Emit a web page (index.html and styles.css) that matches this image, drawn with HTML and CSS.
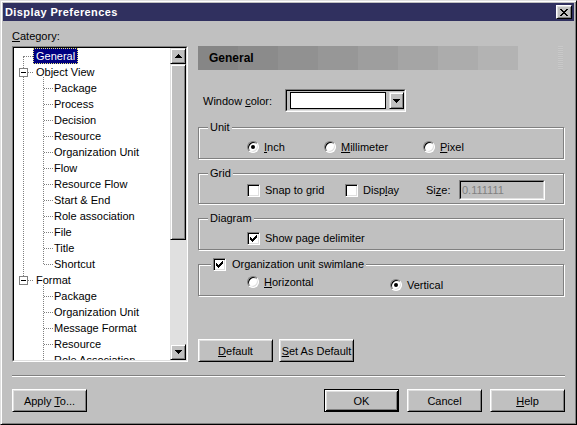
FILE: index.html
```html
<!DOCTYPE html>
<html lang="en">
<head>
  <meta charset="UTF-8">
  <title>Display Preferences</title>
  <link rel="stylesheet" href="styles.css">
</head>
<body>
<div class="window">
  <div class="titlebar">
    <span class="title">Display Preferences</span>
    <span class="close">
      <svg width="8" height="7" viewBox="0 0 8 7" shape-rendering="crispEdges"><path d="M0 0h2v1H0zM6 0h2v1H6zM1 1h2v1H1zM5 1h2v1H5zM2 2h4v1H2zM3 3h2v1H3zM2 4h4v1H2zM1 5h2v1H1zM5 5h2v1H5zM0 6h2v1H0zM6 6h2v1H6z"/></svg>
    </span>
  </div>

  <div class="main">
    <div class="left">
      <div class="caption"><u>C</u>ategory:</div>
      <div class="tree">
        <div class="tree-inner">
          <div class="tree-view">
            <ul class="tree-list">
              <li class="node"><div class="row first"><span class="sel">General</span></div></li>
              <li class="node">
                <div class="row"><span class="toggle"></span>Object View</div>
                <ul class="branch">
                  <li class="row">Package</li>
                  <li class="row">Process</li>
                  <li class="row">Decision</li>
                  <li class="row">Resource</li>
                  <li class="row">Organization Unit</li>
                  <li class="row">Flow</li>
                  <li class="row">Resource Flow</li>
                  <li class="row">Start &amp; End</li>
                  <li class="row">Role association</li>
                  <li class="row">File</li>
                  <li class="row">Title</li>
                  <li class="row">Shortcut</li>
                </ul>
              </li>
              <li class="node">
                <div class="row"><span class="toggle"></span>Format</div>
                <ul class="branch open">
                  <li class="row">Package</li>
                  <li class="row">Organization Unit</li>
                  <li class="row">Message Format</li>
                  <li class="row">Resource</li>
                  <li class="row">Role Association</li>
                </ul>
              </li>
            </ul>
          </div>
          <div class="scrollbar">
            <div class="sb-btn"><svg width="7" height="4" viewBox="0 0 7 4" shape-rendering="crispEdges"><path d="M3 0h1v1H3zM2 1h3v1H2zM1 2h5v1H1zM0 3h7v1H0z"/></svg></div>
            <div class="sb-thumb"></div>
            <div class="sb-track"></div>
            <div class="sb-btn"><svg width="7" height="4" viewBox="0 0 7 4" shape-rendering="crispEdges"><path d="M0 0h7v1H0zM1 1h5v1H1zM2 2h3v1H2zM3 3h1v1H3z"/></svg></div>
          </div>
        </div>
      </div>
    </div>

    <div class="right">
      <div class="head">
        <div class="head-bar">General</div>
        <div class="head-dots"></div>
      </div>

      <div class="color-row">
        <span class="color-label">Window <u>c</u>olor:</span>
        <div class="combo">
          <div class="combo-inner">
            <div class="swatch"></div>
            <div class="drop"><svg width="7" height="4" viewBox="0 0 7 4" shape-rendering="crispEdges"><path d="M0 0h7v1H0zM1 1h5v1H1zM2 2h3v1H2zM3 3h1v1H3z"/></svg></div>
          </div>
        </div>
      </div>

      <div class="group first-group">
        <div class="group-title">Unit</div>
        <div class="opts">
          <label class="opt w77"><span class="radio on"></span><span><u>I</u>nch</span></label>
          <label class="opt w99"><span class="radio"></span><span><u>M</u>illimeter</span></label>
          <label class="opt"><span class="radio"></span><span><u>P</u>ixel</span></label>
        </div>
      </div>

      <div class="group grid-group">
        <div class="group-title">Grid</div>
        <div class="opts">
          <label class="opt w98"><span class="check"></span><span>Snap to <u>g</u>rid</span></label>
          <label class="opt w81"><span class="check"></span><span>Disp<u>l</u>ay</span></label>
          <span class="size-label">Si<u>z</u>e:</span>
          <div class="field"><div class="field-inner">0.111111</div></div>
        </div>
      </div>

      <div class="group">
        <div class="group-title">Diagram</div>
        <div class="opts">
          <label class="opt"><span class="check"><svg width="7" height="7" viewBox="0 0 7 7" shape-rendering="crispEdges"><path d="M6 0h1v1H6zM5 1h2v1H5zM0 2h1v1H0zM4 2h3v1H4zM0 3h2v1H0zM3 3h3v1H3zM0 4h5v1H0zM1 5h3v1H1zM2 6h1v1H2z"/></svg></span><span>Show page delimiter</span></label>
        </div>
      </div>

      <div class="group lane-group">
        <div class="group-title lane-title"><span class="check"><svg width="7" height="7" viewBox="0 0 7 7" shape-rendering="crispEdges"><path d="M6 0h1v1H6zM5 1h2v1H5zM0 2h1v1H0zM4 2h3v1H4zM0 3h2v1H0zM3 3h3v1H3zM0 4h5v1H0zM1 5h3v1H1zM2 6h1v1H2z"/></svg></span><span>Organization unit swimlane</span></div>
        <div class="opts">
          <label class="opt w143"><span class="radio"></span><span><u>H</u>orizontal</span></label>
          <label class="opt low"><span class="radio on"></span><span>Vertical</span></label>
        </div>
      </div>

      <div class="panel-buttons">
        <button class="btn"><u>D</u>efault</button>
        <button class="btn"><u>S</u>et As Default</button>
      </div>
    </div>
  </div>

  <div class="separator"></div>

  <div class="footer">
    <button class="btn">Apply <u>T</u>o...</button>
    <div class="footer-right">
      <button class="btn default">OK</button>
      <button class="btn">Cancel</button>
      <button class="btn"><u>H</u>elp</button>
    </div>
  </div>
</div>
</body>
</html>
```

FILE: styles.css
```css
body {
  margin: 0;
  background: #c0c0c0;
  font-family: "Liberation Sans", Arial, sans-serif;
  font-size: 11px;
  color: #000;
}

u {
  text-decoration: underline;
  text-underline-offset: 1px;
}

.window {
  width: 577px;
  height: 425px;
  box-sizing: border-box;
  border: 1px solid;
  border-color: #dfdfdf #000 #000 #dfdfdf;
  box-shadow: inset 1px 1px #fff, inset -1px -1px #808080;
  padding: 2px;
  background: #c0c0c0;
}

/* title bar */
.titlebar {
  height: 18px;
  background: #30305f;
  display: flex;
  align-items: center;
  padding: 0 2px;
}

.title {
  color: #fff;
  font-weight: bold;
  letter-spacing: 0.4px;
}

.close {
  margin-left: auto;
  width: 16px;
  height: 14px;
  box-sizing: border-box;
  border: 1px solid;
  border-color: #fff #000 #000 #fff;
  box-shadow: inset 1px 1px #dfdfdf, inset -1px -1px #808080;
  background: #c0c0c0;
  display: flex;
  align-items: center;
  justify-content: center;
}

/* main area */
.main {
  display: flex;
  padding: 9px 0 0 9px;
}

.left {
  width: 176px;
}

.caption {
  line-height: 13px;
  height: 13px;
}

.tree {
  margin-top: 3px;
  height: 316px;
  box-sizing: border-box;
  border: 1px solid;
  border-color: #808080 #fff #fff #808080;
}

.tree-inner {
  height: 100%;
  box-sizing: border-box;
  border: 1px solid;
  border-color: #000 #dfdfdf #dfdfdf #000;
  display: flex;
}

.tree-view {
  flex: 1;
  background: #fff;
  overflow: hidden;
}

.tree-list, .branch {
  list-style: none;
  margin: 0;
  padding: 0;
  position: relative;
}

/* dotted connector lines */
.tree-list::before {
  content: "";
  position: absolute;
  left: 9px;
  top: 8px;
  height: 224px;
  border-left: 1px dotted #808080;
}

.branch::before {
  content: "";
  position: absolute;
  left: 29px;
  top: -3px;
  bottom: 8px;
  border-left: 1px dotted #808080;
}

.branch.open::before {
  bottom: 0;
}

.row {
  height: 16px;
  line-height: 16px;
  display: flex;
  align-items: center;
  position: relative;
  white-space: nowrap;
}

.node > .row {
  padding-left: 22px;
}

.node > .row.first {
  padding-left: 19px;
}

.row::before {
  content: "";
  position: absolute;
  left: 10px;
  top: 8px;
  width: 9px;
  border-top: 1px dotted #808080;
}

.branch .row {
  padding-left: 40px;
}

.branch .row::before {
  left: 30px;
  width: 9px;
}

.toggle {
  position: absolute;
  left: 5px;
  top: 4px;
  width: 9px;
  height: 9px;
  box-sizing: border-box;
  border: 1px solid #808080;
  background: #fff;
  z-index: 1;
}

.toggle::after {
  content: "";
  position: absolute;
  left: 1px;
  top: 3px;
  width: 5px;
  height: 1px;
  background: #000;
}

.sel {
  height: 16px;
  line-height: 14px;
  box-sizing: border-box;
  padding: 0 2px;
  border: 1px dotted #e8e878;
  background: #000080;
  color: #fff;
}

/* scrollbar */
.scrollbar {
  width: 16px;
  display: flex;
  flex-direction: column;
  background: #e0e0e0;
}

.sb-btn, .sb-thumb, .drop {
  box-sizing: border-box;
  border: 1px solid;
  border-color: #dfdfdf #000 #000 #dfdfdf;
  box-shadow: inset 1px 1px #fff, inset -1px -1px #808080;
  background: #c0c0c0;
}

.sb-btn {
  height: 16px;
  display: flex;
  align-items: center;
  justify-content: center;
}

.sb-thumb {
  height: 176px;
}

.sb-track {
  flex: 1;
}

/* right panel */
.right {
  width: 366px;
  margin-left: 10px;
  display: flex;
  flex-direction: column;
}

.head {
  margin-top: 16px;
  height: 24px;
  display: flex;
}

.head-bar {
  width: 320px;
  padding-left: 11px;
  box-sizing: border-box;
  line-height: 24px;
  font-size: 12px;
  font-weight: bold;
  background: linear-gradient(to right,
    #868686 0 40px, #8b8b8b 40px 80px, #919191 80px 120px, #979797 120px 160px,
    #9e9e9e 160px 200px, #a5a5a5 200px 240px, #acacac 240px 280px, #b3b3b3 280px 320px);
}

.head-dots {
  margin-left: auto;
  margin-right: 1px;
  width: 5px;
  background: repeating-linear-gradient(#c9c9c9 0 1px, #bdbdbd 1px 2px);
}

.color-row {
  margin-top: 19px;
  height: 23px;
  display: flex;
  align-items: center;
}

.color-label {
  width: 82px;
  padding-left: 5px;
}

.combo {
  width: 121px;
  height: 23px;
  box-sizing: border-box;
  border: 1px solid;
  border-color: #808080 #fff #fff #808080;
}

.combo-inner {
  height: 100%;
  box-sizing: border-box;
  border: 1px solid;
  border-color: #000 #dfdfdf #dfdfdf #000;
  display: flex;
  align-items: center;
  padding-left: 3px;
}

.swatch {
  width: 96px;
  height: 17px;
  box-sizing: border-box;
  border: 1px solid #000;
  background: #fff;
}

.drop {
  width: 15px;
  height: 17px;
  margin-left: 3px;
  display: flex;
  align-items: center;
  justify-content: center;
}

/* group boxes */
.group {
  margin-top: 14px;
  border: 1px solid #808080;
  box-shadow: inset 1px 1px #fff, 1px 1px #fff;
  padding-bottom: 4px;
}

.first-group {
  margin-top: 15px;
}

.group-title {
  width: max-content;
  height: 13px;
  line-height: 13px;
  margin: -7px 0 0 9px;
  padding: 0 2px;
  background: #c0c0c0;
  display: flex;
  align-items: center;
}

.lane-title {
  margin-left: 12px;
}

.lane-title .check {
  margin-right: 6px;
}

.opts {
  margin-top: 6px;
  height: 14px;
  padding-left: 48px;
  display: flex;
  align-items: center;
}

.grid-group {
  padding-bottom: 3px;
}

.grid-group .opts {
  margin-top: 0;
  height: 20px;
}

.lane-group {
  padding-bottom: 3px;
}

.lane-group .opts {
  margin-top: 4px;
  height: 17px;
  align-items: flex-start;
}

.opt {
  display: flex;
  align-items: center;
  height: 14px;
  white-space: nowrap;
}

.opt.low {
  margin-top: 3px;
}

.w77 { width: 77px; }
.w81 { width: 81px; }
.w98 { width: 98px; }
.w99 { width: 99px; }
.w143 { width: 143px; }

.radio {
  width: 12px;
  height: 12px;
  box-sizing: border-box;
  border-radius: 50%;
  border: 1px solid;
  border-color: #808080 #fff #fff #808080;
  box-shadow: inset 1px 1px #000, inset -1px -1px #dfdfdf;
  background: #fff;
  margin-right: 5px;
  display: flex;
  align-items: center;
  justify-content: center;
}

.radio.on::after {
  content: "";
  width: 4px;
  height: 4px;
  border-radius: 50%;
  background: #000;
}

.check {
  width: 13px;
  height: 13px;
  box-sizing: border-box;
  border: 1px solid;
  border-color: #808080 #fff #fff #808080;
  box-shadow: inset 1px 1px #000, inset -1px -1px #dfdfdf;
  background: #fff;
  margin-right: 5px;
  display: flex;
  align-items: center;
  justify-content: center;
  flex-shrink: 0;
}

.size-label {
  width: 33px;
}

.field {
  width: 86px;
  height: 20px;
  box-sizing: border-box;
  border: 1px solid;
  border-color: #808080 #fff #fff #808080;
}

.field-inner {
  height: 100%;
  box-sizing: border-box;
  border: 1px solid;
  border-color: #000 #dfdfdf #dfdfdf #000;
  padding-left: 1px;
  line-height: 16px;
  color: #808080;
}

/* buttons */
.panel-buttons {
  margin-top: auto;
  display: flex;
  gap: 6px;
}

.btn {
  width: 75px;
  height: 23px;
  box-sizing: border-box;
  padding: 0;
  border: 1px solid;
  border-color: #fff #000 #000 #fff;
  box-shadow: inset 1px 1px #dfdfdf, inset -1px -1px #808080;
  background: #c0c0c0;
  font-family: inherit;
  font-size: 11px;
  color: #000;
}

.btn.default {
  border-color: #000;
  box-shadow: inset 1px 1px #fff, inset -1px -1px #000, inset 2px 2px #dfdfdf, inset -2px -2px #808080;
}

.separator {
  margin: 13px 0 0 9px;
  width: 553px;
  border-top: 1px solid #808080;
  border-bottom: 1px solid #fff;
}

.footer {
  margin-top: 12px;
  padding: 0 9px;
  display: flex;
}

.footer-right {
  margin-left: auto;
  display: flex;
  gap: 8px;
}
```
